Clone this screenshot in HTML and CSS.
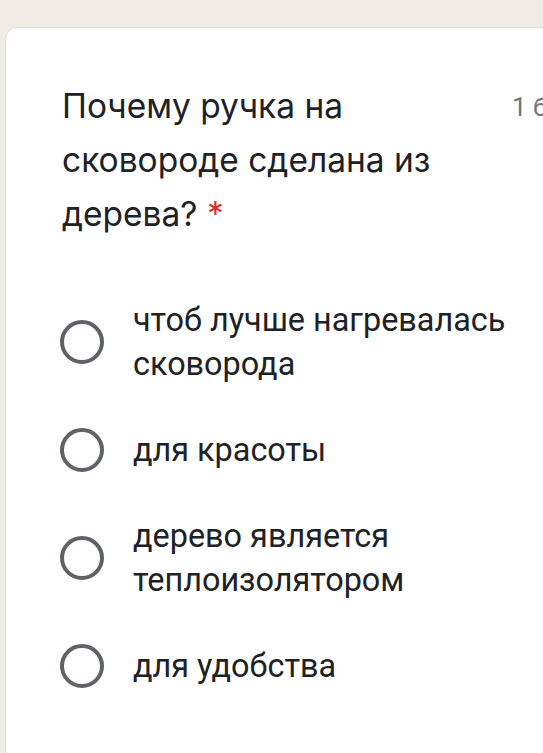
FILE: index.html
```html
<!DOCTYPE html>
<html lang="ru">
<head>
<meta charset="utf-8">
<title>Вопрос</title>
<link rel="stylesheet" href="styles.css">
</head>
<body>
<div class="card">
  <div class="header">
    <div class="question">Почему ручка на сковороде сделана из дерева? <span class="req">*</span></div>
    <div class="points">1 балл</div>
  </div>
  <div class="options">
    <label class="option"><span class="radio"></span><span class="label">чтоб лучше нагревалась сковорода</span></label>
    <label class="option"><span class="radio"></span><span class="label">для красоты</span></label>
    <label class="option"><span class="radio"></span><span class="label">дерево является теплоизолятором</span></label>
    <label class="option"><span class="radio"></span><span class="label">для удобства</span></label>
  </div>
</div>
</body>
</html>
```

FILE: styles.css
```css
html, body {
  margin: 0;
  padding: 0;
  overflow: hidden;
  height: 100%;
}
body {
  background: #f1ebe6;
  padding-top: 27px;
  padding-left: 5px;
  box-sizing: border-box;
}
.card {
  width: 700px;
  height: 900px;
  background: #ffffff;
  border: 1px solid #dadce0;
  border-radius: 12px 0 0 0;
  box-sizing: border-box;
  padding: 51px 0 0 54px;
}
.header {
  display: flex;
  align-items: flex-start;
  padding-left: 2px;
}
.question {
  width: 420px;
  font-family: Inter, "Open Sans", sans-serif;
  font-size: 33.5px;
  line-height: 54px;
  color: #202124;
}
.req {
  color: #d93025;
}
.points {
  margin-left: 30px;
  margin-top: 8px;
  font-family: Roboto, sans-serif;
  font-size: 26px;
  line-height: 40px;
  color: #70757a;
  white-space: nowrap;
}
.options {
  margin-top: 57px;
  display: flex;
  flex-direction: column;
  gap: 20px;
}
.option {
  display: flex;
  align-items: center;
  min-height: 88px;
}
.radio {
  flex: none;
  width: 44px;
  height: 44px;
  box-sizing: border-box;
  border: 4px solid #5f6368;
  border-radius: 50%;
  margin-right: 29px;
}
.label {
  width: 400px;
  font-family: Roboto, sans-serif;
  font-size: 32.4px;
  line-height: 44px;
  color: #202124;
}
```
